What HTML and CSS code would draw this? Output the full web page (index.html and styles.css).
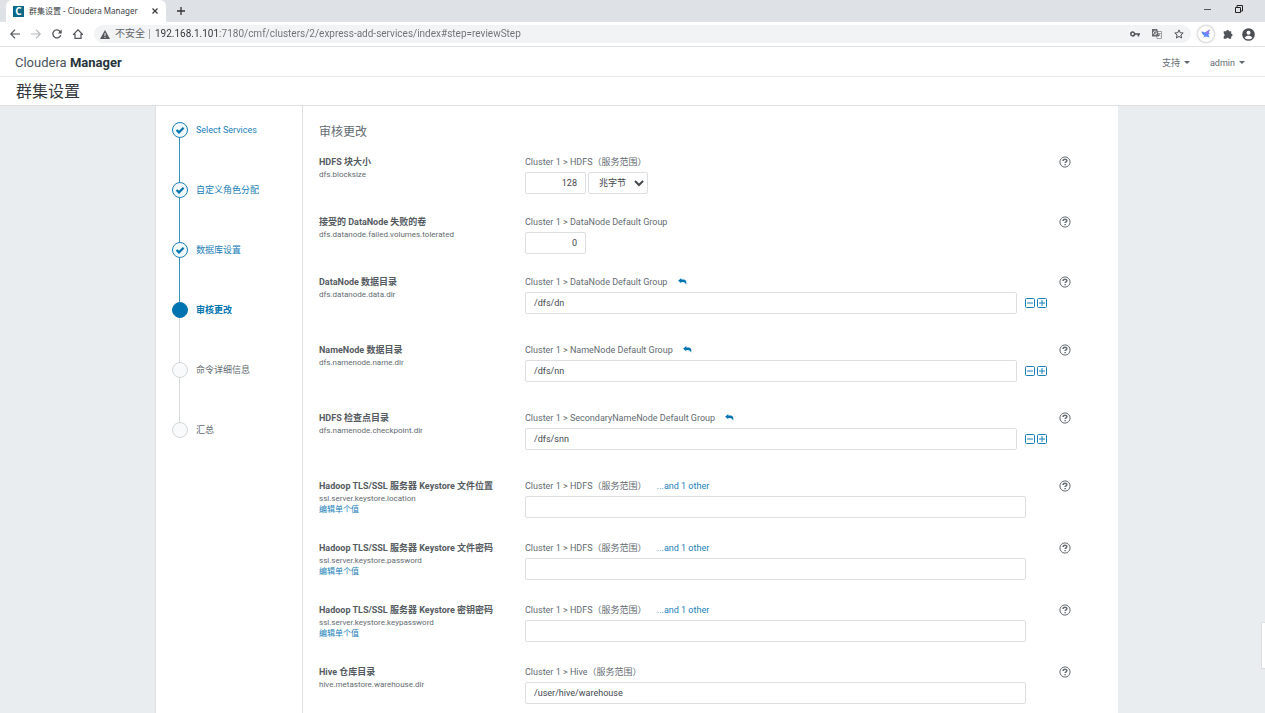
FILE: index.html
```html
<!DOCTYPE html>
<html lang="zh-CN">
<head>
    <meta charset="UTF-8">
    <title>群集设置 - Cloudera Manager</title>
    <link rel="stylesheet" href="styles.css">
</head>
<body>
    <svg class="sprite" aria-hidden="true">
        <symbol id="help" viewBox="0 0 12 12">
            <circle cx="6" cy="6" r="5.1" fill="none" stroke="currentColor" stroke-width="1"/>
            <path d="M4.1 4.9C4.1 2.6 7.9 2.7 7.9 4.6C7.9 5.8 6.1 5.8 6.1 7.1" fill="none" stroke="currentColor" stroke-width="1.5"/>
            <path d="M5.4 7.9h1.4v1.4H5.4z" fill="currentColor"/>
        </symbol>
        <symbol id="undo" viewBox="0 0 10 8">
            <path d="M0 3L3.6 0v1.8H5.5C8.8 1.8 10 3.6 9.2 7.8C8.4 5.6 7.2 4.5 5.5 4.5H3.6V6z" fill="currentColor"/>
        </symbol>
        <symbol id="minus" viewBox="0 0 10 10">
            <rect x=".5" y=".5" width="9" height="9" rx="1" fill="none" stroke="currentColor"/>
            <path d="M2 5h6" stroke="currentColor"/>
        </symbol>
        <symbol id="plus" viewBox="0 0 10 10">
            <rect x=".5" y=".5" width="9" height="9" rx="1" fill="none" stroke="currentColor"/>
            <path d="M2 5h6M5 2v6" stroke="currentColor"/>
        </symbol>
        <symbol id="check" viewBox="0 0 16 16">
            <path d="M4.6 8l2.4 2.4 4.6-4.6" fill="none" stroke="currentColor" stroke-width="2.2"/>
        </symbol>
    </svg>

    <div class="tabstrip">
        <div class="tab">
            <span class="favicon">C</span>
            <span class="tab-title">群集设置 - Cloudera Manager</span>
            <button class="icon-btn" aria-label="Close tab"><svg width="6" height="6" viewBox="0 0 6 6"><path d="M.5.5l5 5M5.5.5l-5 5" stroke="#333" stroke-width="1.1"/></svg></button>
        </div>
        <button class="icon-btn new-tab" aria-label="New tab"><svg width="8" height="8" viewBox="0 0 8 8"><path d="M4 0v8M0 4h8" stroke="#333" stroke-width="1.3"/></svg></button>
        <div class="window-buttons">
            <button class="icon-btn" aria-label="Minimize"><svg width="8" height="8" viewBox="0 0 8 8"><path d="M0 4.5h7" stroke="#555"/></svg></button>
            <button class="icon-btn" aria-label="Restore"><svg width="8" height="8" viewBox="0 0 8 8"><path d="M.5 2.5h5v5h-5zM2 2.5V.5h5.5V6H5.5" fill="none" stroke="#222"/></svg></button>
        </div>
    </div>

    <div class="toolbar">
        <div class="nav-buttons">
            <button class="icon-btn" aria-label="Back"><svg width="10" height="10" viewBox="0 0 10 10"><path d="M10 5H1M5 .7L.8 5 5 9.3" fill="none" stroke="#505357" stroke-width="1.2"/></svg></button>
            <button class="icon-btn" aria-label="Forward"><svg width="10" height="10" viewBox="0 0 10 10"><path d="M0 5h9M5 .7L9.2 5 5 9.3" fill="none" stroke="#b5b7ba" stroke-width="1.2"/></svg></button>
            <button class="icon-btn" aria-label="Reload"><svg width="10" height="10" viewBox="0 0 10 10"><path d="M8.7 6.2A4 4 0 1 1 7.9 2.3L9 3.4" fill="none" stroke="#505357" stroke-width="1.3"/><path d="M9.7.4v4H5.8z" fill="#505357"/></svg></button>
            <button class="icon-btn" aria-label="Home"><svg width="10" height="10" viewBox="0 0 10 10"><path d="M.5 5.3L5 .8l4.5 4.5H8v4H2v-4z" fill="none" stroke="#505357" stroke-width="1.2"/></svg></button>
        </div>
        <div class="omnibox">
            <svg width="10" height="9" viewBox="0 0 10 9"><path d="M5 0l5 9H0z" fill="#55585c"/><path d="M5 3v3M5 6.8v1.1" stroke="#f1f3f4"/></svg>
            <label for="url">不安全</label>
            <input id="url" type="text" value="192.168.1.101:7180/cmf/clusters/2/express-add-services/index#step=reviewStep">
            <div class="omnibox-icons">
                <button class="icon-btn" aria-label="Passwords"><svg width="10" height="6" viewBox="0 0 10 6"><circle cx="2.7" cy="3" r="1.9" fill="none" stroke="#505357" stroke-width="1.5"/><path d="M4.5 3H10M8.4 3v2.5" stroke="#505357" stroke-width="1.5"/></svg></button>
                <button class="icon-btn" aria-label="Translate"><svg width="10" height="10" viewBox="0 0 10 10"><path d="M4 2.5h5.5v7H5z" fill="#fff" stroke="#888" stroke-width=".8"/><path d="M0 0h5.2l2 7.5H0z" fill="#66696d"/><path d="M4.5 2.8A1.7 1.7 0 1 0 4.8 4H3.3" fill="none" stroke="#fff" stroke-width=".8"/><path d="M6.2 4.5h2.6M8.2 4.5L6.8 7M7 5.5l1.5 2" stroke="#666" stroke-width=".6"/></svg></button>
                <button class="icon-btn" aria-label="Bookmark"><svg width="10" height="10" viewBox="0 0 10 10"><path d="M5 .9l1.2 2.8 3 .3-2.3 2 .7 3L5 7.4 2.4 9l.7-3L.8 4l3-.3z" fill="none" stroke="#505357"/></svg></button>
            </div>
        </div>
        <button class="icon-btn bird" aria-label="Extension"><svg width="10" height="10" viewBox="0 0 10 10"><path d="M.5 2.2l3.6 1.2L8.8.6 7.6 4l1.9.8-2.2.5L8.6 8.4 5.2 7.6 2 8.6 3.5 6.8C1.8 5.8.8 4.4.5 2.2z" fill="#5b8cff"/><path d="M4.1 3.400L8.800.600 7.600 4 5.400 5.400z" fill="#9474f5"/></svg></button>
        <button class="icon-btn" aria-label="Extensions"><svg width="10" height="10" viewBox="0 0 10 10"><path d="M.7 2.3h2.5a1.4 1.4 0 1 1 2.800 0h2.200v2.500a1.300 1.300 0 0 1 0 2.600v2.300H6a1.400 1.400 0 0 0-2.700 0H.7V7.200a1.300 1.300 0 0 0 0-2.500z" fill="#505357"/></svg></button>
        <button class="icon-btn" aria-label="Profile"><svg width="13" height="13" viewBox="0 0 13 13"><circle cx="6.5" cy="6.5" r="6.3" fill="#4b4e52"/><circle cx="6.5" cy="4.7" r="2" fill="#fff"/><path d="M2.7 9.7c1.4-2.5 6.2-2.5 7.6 0-1.5 2-6.1 2-7.6 0z" fill="#fff"/></svg></button>
    </div>

    <header class="app-header">
        <a class="brand" href="#">Cloudera <b>Manager</b></a>
        <nav>
            <a href="#">支持 <i class="caret"></i></a>
            <a href="#">admin <i class="caret"></i></a>
        </nav>
    </header>
    <h1>群集设置</h1>

    <main>
        <div class="wizard">
            <ol class="steps">
                <li class="done"><span class="dot"><svg width="16" height="16"><use href="#check"/></svg></span><a href="#">Select Services</a></li>
                <li class="done"><span class="dot"><svg width="16" height="16"><use href="#check"/></svg></span><a href="#">自定义角色分配</a></li>
                <li class="done"><span class="dot"><svg width="16" height="16"><use href="#check"/></svg></span><a href="#">数据库设置</a></li>
                <li class="current"><span class="dot"></span><span>审核更改</span></li>
                <li><span class="dot"></span><span>命令详细信息</span></li>
                <li><span class="dot"></span><span>汇总</span></li>
            </ol>

            <form class="review">
                <h2>审核更改</h2>

                <div class="row">
                    <div class="name">
                        <label for="blocksize">HDFS 块大小</label>
                        <small>dfs.blocksize</small>
                    </div>
                    <div class="field">
                        <div class="scope">Cluster 1 &gt; HDFS（服务范围）</div>
                        <div class="inputs">
                            <input class="number" id="blocksize" type="text" value="128">
                            <select aria-label="单位"><option>兆字节</option></select>
                        </div>
                    </div>
                    <button type="button" class="icon-btn help" aria-label="帮助"><svg width="12" height="12"><use href="#help"/></svg></button>
                </div>

                <div class="row">
                    <div class="name">
                        <label for="volumes">接受的 DataNode 失败的卷</label>
                        <small>dfs.datanode.failed.volumes.tolerated</small>
                    </div>
                    <div class="field">
                        <div class="scope">Cluster 1 &gt; DataNode Default Group</div>
                        <div class="inputs"><input class="number" id="volumes" type="text" value="0"></div>
                    </div>
                    <button type="button" class="icon-btn help" aria-label="帮助"><svg width="12" height="12"><use href="#help"/></svg></button>
                </div>

                <div class="row list">
                    <div class="name">
                        <label for="datadir">DataNode 数据目录</label>
                        <small>dfs.datanode.data.dir</small>
                    </div>
                    <div class="field">
                        <div class="scope">Cluster 1 &gt; DataNode Default Group <button type="button" class="icon-btn undo" aria-label="重置"><svg width="9" height="7"><use href="#undo"/></svg></button></div>
                        <div class="inputs">
                            <input id="datadir" type="text" value="/dfs/dn">
                            <button type="button" class="icon-btn" aria-label="删除"><svg width="10" height="10"><use href="#minus"/></svg></button>
                            <button type="button" class="icon-btn" aria-label="添加"><svg width="10" height="10"><use href="#plus"/></svg></button>
                        </div>
                    </div>
                    <button type="button" class="icon-btn help" aria-label="帮助"><svg width="12" height="12"><use href="#help"/></svg></button>
                </div>

                <div class="row list">
                    <div class="name">
                        <label for="namedir">NameNode 数据目录</label>
                        <small>dfs.namenode.name.dir</small>
                    </div>
                    <div class="field">
                        <div class="scope">Cluster 1 &gt; NameNode Default Group <button type="button" class="icon-btn undo" aria-label="重置"><svg width="9" height="7"><use href="#undo"/></svg></button></div>
                        <div class="inputs">
                            <input id="namedir" type="text" value="/dfs/nn">
                            <button type="button" class="icon-btn" aria-label="删除"><svg width="10" height="10"><use href="#minus"/></svg></button>
                            <button type="button" class="icon-btn" aria-label="添加"><svg width="10" height="10"><use href="#plus"/></svg></button>
                        </div>
                    </div>
                    <button type="button" class="icon-btn help" aria-label="帮助"><svg width="12" height="12"><use href="#help"/></svg></button>
                </div>

                <div class="row list">
                    <div class="name">
                        <label for="checkpoint">HDFS 检查点目录</label>
                        <small>dfs.namenode.checkpoint.dir</small>
                    </div>
                    <div class="field">
                        <div class="scope">Cluster 1 &gt; SecondaryNameNode Default Group <button type="button" class="icon-btn undo" aria-label="重置"><svg width="9" height="7"><use href="#undo"/></svg></button></div>
                        <div class="inputs">
                            <input id="checkpoint" type="text" value="/dfs/snn">
                            <button type="button" class="icon-btn" aria-label="删除"><svg width="10" height="10"><use href="#minus"/></svg></button>
                            <button type="button" class="icon-btn" aria-label="添加"><svg width="10" height="10"><use href="#plus"/></svg></button>
                        </div>
                    </div>
                    <button type="button" class="icon-btn help" aria-label="帮助"><svg width="12" height="12"><use href="#help"/></svg></button>
                </div>

                <div class="row keystore">
                    <div class="name">
                        <label for="location">Hadoop TLS/SSL 服务器 Keystore 文件位置</label>
                        <small>ssl.server.keystore.location</small>
                        <a href="#">编辑单个值</a>
                    </div>
                    <div class="field">
                        <div class="scope">Cluster 1 &gt; HDFS（服务范围） <a href="#">...and 1 other</a></div>
                        <div class="inputs"><input id="location" type="text"></div>
                    </div>
                    <button type="button" class="icon-btn help" aria-label="帮助"><svg width="12" height="12"><use href="#help"/></svg></button>
                </div>

                <div class="row keystore">
                    <div class="name">
                        <label for="password">Hadoop TLS/SSL 服务器 Keystore 文件密码</label>
                        <small>ssl.server.keystore.password</small>
                        <a href="#">编辑单个值</a>
                    </div>
                    <div class="field">
                        <div class="scope">Cluster 1 &gt; HDFS（服务范围） <a href="#">...and 1 other</a></div>
                        <div class="inputs"><input id="password" type="password"></div>
                    </div>
                    <button type="button" class="icon-btn help" aria-label="帮助"><svg width="12" height="12"><use href="#help"/></svg></button>
                </div>

                <div class="row keystore">
                    <div class="name">
                        <label for="keypassword">Hadoop TLS/SSL 服务器 Keystore 密钥密码</label>
                        <small>ssl.server.keystore.keypassword</small>
                        <a href="#">编辑单个值</a>
                    </div>
                    <div class="field">
                        <div class="scope">Cluster 1 &gt; HDFS（服务范围） <a href="#">...and 1 other</a></div>
                        <div class="inputs"><input id="keypassword" type="password"></div>
                    </div>
                    <button type="button" class="icon-btn help" aria-label="帮助"><svg width="12" height="12"><use href="#help"/></svg></button>
                </div>

                <div class="row">
                    <div class="name">
                        <label for="warehouse">Hive 仓库目录</label>
                        <small>hive.metastore.warehouse.dir</small>
                    </div>
                    <div class="field">
                        <div class="scope">Cluster 1 &gt; Hive（服务范围）</div>
                        <div class="inputs"><input id="warehouse" type="text" value="/user/hive/warehouse"></div>
                    </div>
                    <button type="button" class="icon-btn help" aria-label="帮助"><svg width="12" height="12"><use href="#help"/></svg></button>
                </div>
            </form>
        </div>
    </main>
    <div class="side-handle"></div>
</body>
</html>
```
FILE: styles.css
```css
* {
    box-sizing: border-box;
}

body {
    margin: 0;
    height: 100vh;
    display: flex;
    flex-direction: column;
    overflow: hidden;
    font-family: Roboto, "Noto Sans CJK SC", sans-serif;
    font-size: 9px;
    line-height: 14px;
    color: #646b71;
    background: #fff;
}

a {
    color: #1a80b8;
    text-decoration: none;
}

input,
select {
    font: inherit;
    color: #43484d;
}

.sprite {
    display: none;
}

.icon-btn {
    display: inline-flex;
    align-items: center;
    justify-content: center;
    padding: 0;
    border: none;
    background: none;
    color: inherit;
    cursor: pointer;
}

/* browser bars */
.tabstrip {
    flex: none;
    display: flex;
    align-items: center;
    height: 22px;
    padding-left: 6px;
    background: #dee1e6;
    font-family: "Noto Sans", "Noto Sans CJK SC", sans-serif;
    font-size: 8px;
}

.tab {
    display: flex;
    align-items: center;
    width: 160px;
    height: 22px;
    padding: 0 8px 0 7px;
    border-radius: 6px 6px 0 0;
    background: #fff;
    color: #3c4043;
}

.favicon {
    width: 11px;
    height: 11px;
    margin-right: 5px;
    background: #0c6a88;
    color: #fff;
    font-size: 10px;
    font-weight: bold;
    line-height: 11px;
    text-align: center;
}

.tab-title {
    flex: 1;
    white-space: nowrap;
}

.new-tab {
    margin-left: 11px;
}

.window-buttons {
    display: flex;
    gap: 23px;
    margin-left: auto;
    padding: 0 22px 4px 0;
}

.toolbar {
    flex: none;
    display: flex;
    align-items: center;
    gap: 9px;
    height: 25px;
    padding: 0 10px;
    border-bottom: 1px solid #dfe0e2;
    font-size: 10px;
}

.nav-buttons {
    display: flex;
    gap: 11px;
}

.omnibox {
    flex: 1;
    display: flex;
    align-items: center;
    height: 18px;
    margin: 0 -2px 0 2px;
    padding: 0 7px 0 6px;
    border-radius: 9px;
    background: #f1f3f4;
}

.omnibox label {
    margin: 0 5px;
    padding-right: 4px;
    border-right: 1px solid #aaa;
    line-height: 10px;
    color: #5f6368;
}

/* host is darker than the path */
.omnibox input {
    flex: 1;
    border: none;
    padding: 0;
    outline: none;
    color: transparent;
    background: linear-gradient(to right, #303336 62px, #6c7074 62px);
    background-clip: text;
}

.omnibox-icons {
    display: flex;
    gap: 12px;
}

.bird {
    width: 16px;
    height: 16px;
    border-radius: 50%;
    background: #fff;
    box-shadow: 0 0 3px rgba(0, 0, 0, 0.4);
}

/* application */
.app-header {
    flex: none;
    display: flex;
    align-items: center;
    justify-content: space-between;
    height: 30px;
    padding: 2px 20px 0 15px;
    border-bottom: 1px solid #e6e7e8;
}

.brand {
    font-size: 13px;
    color: #4a555c;
}

.brand b {
    color: #26343c;
}

.app-header nav {
    display: flex;
    gap: 20px;
}

.app-header nav a {
    display: flex;
    align-items: center;
    gap: 4px;
    color: #646b71;
}

.caret {
    border: 3px solid transparent;
    border-top-color: #5f666c;
    border-bottom: none;
}

h1 {
    flex: none;
    height: 29px;
    margin: 0;
    padding-left: 16px;
    border-bottom: 1px solid #dee0e1;
    font-size: 16px;
    font-weight: normal;
    line-height: 30px;
    color: #32383d;
}

main {
    flex: 1;
    min-height: 0;
    padding: 0 147px 0 155px;
    background: #e9edf0;
    overflow: hidden;
}

.wizard {
    display: flex;
    min-height: 100%;
    border-left: 1px solid #dee1e3;
    background: #fff;
}

.steps {
    flex: none;
    width: 147px;
    margin: 0;
    padding: 16px 0 0 16px;
    border-right: 1px solid #dee1e3;
    list-style: none;
}

.steps li {
    display: grid;
    grid-template-columns: 16px 1fr;
    grid-template-rows: 16px 44px;
    column-gap: 8px;
    line-height: 16px;
}

.steps li:not(:last-child)::after {
    content: "";
    width: 1px;
    margin-left: 7px;
    background: #d8dadc;
}

.steps li.done::after {
    background: #3b94c4;
}

.dot {
    width: 16px;
    height: 16px;
    border: 1px solid #d4d7d9;
    border-radius: 50%;
    background: #f9fafc;
}

.dot svg {
    display: block;
    margin: -1px;
}

.done .dot {
    border-color: #1a80b8;
    background: #f1f8fc;
    color: #0074b0;
}

.current {
    color: #0074b0;
    font-weight: bold;
}

.current .dot {
    border-color: #0074b0;
    background: #0074b0;
}

.review {
    flex: 1;
    padding: 18px 47px 0 16px;
}

h2 {
    margin: 0 0 15px;
    font-size: 12px;
    font-weight: normal;
    line-height: 16px;
}

.row {
    display: grid;
    grid-template-columns: 206px 1fr 12px;
    min-height: 60px;
}

.row.list {
    min-height: 68px;
}

.row.keystore {
    min-height: 62px;
}

.name label,
.name small,
.name a {
    display: block;
    white-space: nowrap;
}

.name label {
    font-weight: bold;
    color: #555b61;
}

.name small,
.name a {
    font-size: 8px;
    line-height: 11px;
}

.name a {
    width: max-content;
}

.field {
    padding-right: 33px;
}

.scope {
    margin-bottom: 3px;
    white-space: nowrap;
}

.scope a,
.undo {
    margin-left: 8px;
}

.undo {
    color: #0074b0;
}

.inputs {
    display: flex;
    align-items: center;
    gap: 2px;
}

.inputs input,
.inputs select {
    height: 22px;
    border: 1px solid #dcdfe1;
    border-radius: 2px;
    background: #fff;
}

.inputs input {
    flex: 1;
    min-width: 0;
    padding: 0 8px;
}

.inputs .number {
    flex: none;
    width: 61px;
    text-align: right;
}

.inputs select {
    width: 60px;
    padding: 0 0 0 6px;
}

.inputs .icon-btn {
    color: #1a80b8;
}

.list .field {
    padding-right: 12px;
}

.list .inputs input {
    margin-right: 6px;
}

.help {
    height: 14px;
}

.side-handle {
    position: fixed;
    right: 0;
    top: 622px;
    width: 4px;
    height: 47px;
    border: 1px solid #dcdfe1;
    border-right: none;
    background: #fff;
}
```
